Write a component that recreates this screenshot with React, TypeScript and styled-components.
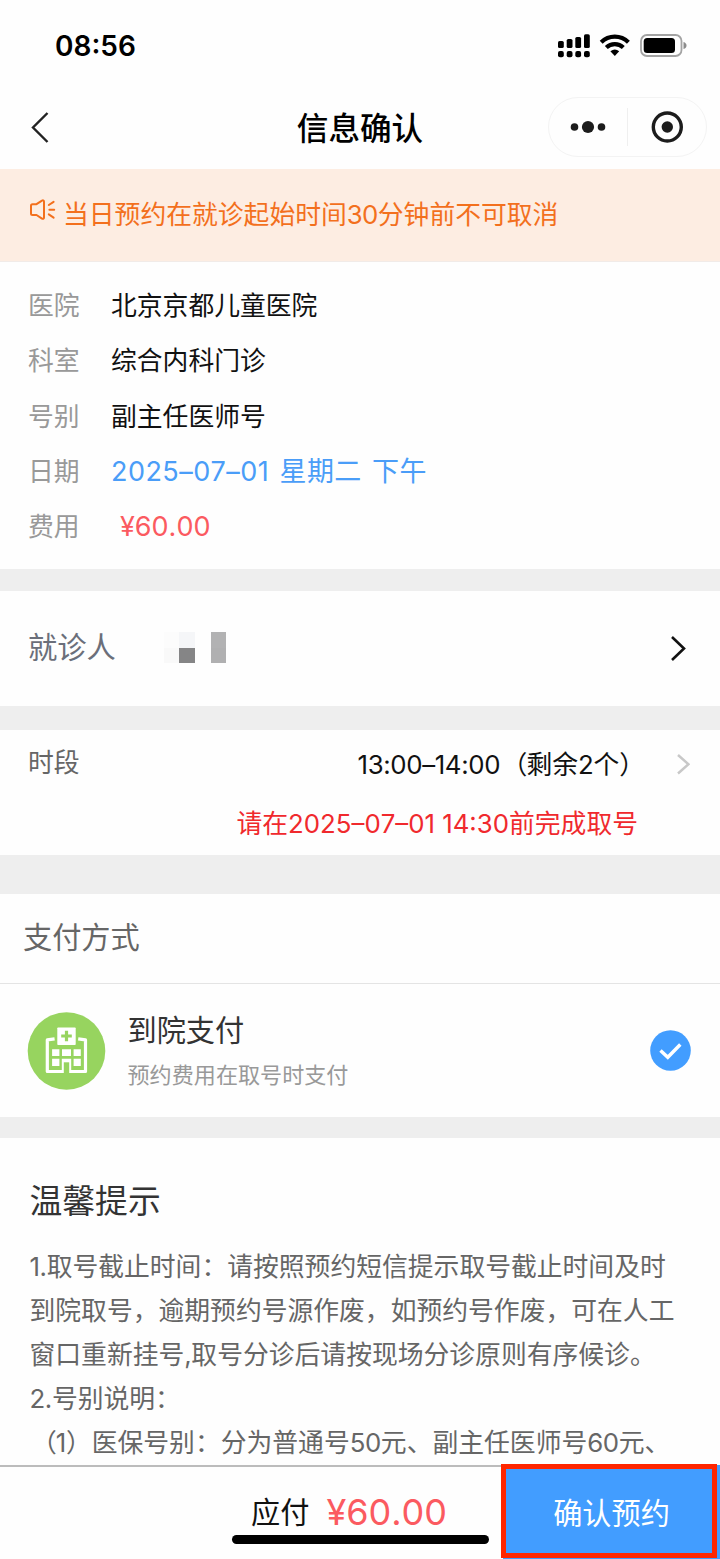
import React from 'react';
import styled, { createGlobalStyle } from 'styled-components';

const GlobalStyle = createGlobalStyle`
  * { box-sizing: border-box; }
  body {
    margin: 0;
    background: #fefefe;
    font-family: Inter, "Noto Sans CJK SC", sans-serif;
    text-spacing-trim: space-all;
    font-kerning: none;
  }
`;

const Screen = styled.div`
  width: 720px;
  height: 1559px;
  display: flex;
  flex-direction: column;
  overflow: hidden;
  background: #fefefe;
`;

const Text = styled.span<{ $size: number; $color?: string; $weight?: number; $track?: number; $word?: number }>`
  font-size: ${p => p.$size}px;
  color: ${p => p.$color ?? '#111'};
  font-weight: ${p => p.$weight ?? 400};
  letter-spacing: ${p => p.$track ?? 0}px;
  word-spacing: ${p => p.$word ?? 0}px;
  line-height: 1.2;
  white-space: pre;
`;

const Digits = styled.span<{ $track: number }>`
  letter-spacing: ${p => p.$track}px;
`;

const OpenParen = styled.span`
  margin-left: 1.5px;
  letter-spacing: -1px;
`;

const StatusBar = styled.header`
  height: 90px;
  flex: none;
  display: flex;
  justify-content: space-between;
  align-items: center;
  padding: 2px 33px 0 55px;
`;

const Clock = styled.div`
  display: flex;
  padding-top: 2px;
`;

const NavBar = styled.nav`
  height: 78.5px;
  flex: none;
  display: grid;
  grid-template-columns: 1fr auto 1fr;
  align-items: center;
  padding: 0 13px 4px;
`;

const Back = styled.div`
  display: flex;
  padding-left: 17.5px;
`;

const NavTitle = styled.div`
  display: flex;
  padding-top: 4px;
`;

const Capsule = styled.div`
  justify-self: end;
  width: 159px;
  height: 60px;
  border: 1px solid #f3f3f3;
  border-radius: 30px;
  display: flex;
  align-items: center;
`;

const CapsuleHalf = styled.div`
  flex: 1;
  display: flex;
  justify-content: center;
`;

const CapsuleRule = styled.div`
  width: 1px;
  height: 38px;
  background: #efefef;
`;

const Notice = styled.div`
  height: 93.5px;
  flex: none;
  display: flex;
  align-items: flex-start;
  gap: 7px;
  padding: 29px 28px;
  background: #fdede2;
  border-bottom: 1px solid #f1ebe8;
`;

const NoticeText = styled.div`
  display: flex;
  padding-top: 2px;
`;

const Info = styled.dl`
  margin: 0;
  height: 307px;
  flex: none;
  padding: 17px 28px 0;
`;

const InfoRow = styled.div`
  height: 55.25px;
  display: flex;
  align-items: center;
`;

const Label = styled.dt`
  width: 83px;
  display: flex;
`;

const Value = styled.dd<{ $indent?: number }>`
  margin: 0 0 0 ${p => p.$indent ?? 0}px;
  display: flex;
`;

const Gap = styled.div<{ $h: number }>`
  height: ${p => p.$h}px;
  flex: none;
  background: #eeeeee;
`;

const Patient = styled.section`
  height: 115px;
  flex: none;
  display: flex;
  align-items: center;
  padding: 0 34px 1px 28px;
`;

const Mosaic = styled.div`
  margin: -1px auto 0 48px;
  display: grid;
  grid-template: repeat(2, 15.7px) / repeat(4, 15.6px);
`;

const Pixel = styled.i<{ $c: string }>`
  background: ${p => p.$c};
`;

const Slot = styled.section`
  height: 125.5px;
  flex: none;
  padding: 14px 30px 0 28px;
`;

const SlotRow = styled.div`
  display: flex;
  align-items: center;
  height: 40px;
`;

const SlotTime = styled.div`
  margin-left: auto;
  padding-top: 4px;
  margin-right: 30.5px;
  display: flex;
`;

const SlotArrow = styled.div`
  display: flex;
  padding-top: 1px;
`;

const SlotHint = styled.div`
  display: flex;
  justify-content: flex-end;
  padding: 25.5px 52px 0 0;
`;

const PayTitle = styled.div`
  height: 89.5px;
  flex: none;
  display: flex;
  align-items: center;
  padding: 0 23px 1px;
  border-bottom: 1px solid #e4e4e4;
`;

const PayOption = styled.div`
  height: 133.5px;
  flex: none;
  display: flex;
  align-items: center;
  padding: 1px 29.5px 0 27.5px;
`;

const PayText = styled.div`
  margin: 0 auto 0 22px;
  display: flex;
  flex-direction: column;
  gap: 13px;
`;

const Tips = styled.section`
  height: 327px;
  flex: none;
  padding: 44.5px 29.5px 0;
  overflow: hidden;
`;

const TipLine = styled.div`
  height: 44.1px;
  display: flex;
  align-items: center;
`;

const TipBody = styled.div`
  padding-top: 24px;
`;

const Footer = styled.footer`
  position: relative;
  height: 94px;
  flex: none;
  display: flex;
  border-top: 2px solid #bcbcbc;
`;

const Total = styled.div`
  width: 503px;
  display: flex;
  align-items: center;
  justify-content: flex-end;
  gap: 17px;
  padding: 1px 56px 0 0;
`;

const Confirm = styled.button`
  flex: 1;
  margin-top: -2px;
  border: 0;
  padding: 5px 0 0;
  background: #429dff;
  font-family: inherit;
`;

const Highlight = styled.div`
  position: absolute;
  left: 501px;
  top: -3px;
  width: 216px;
  height: 94.5px;
  border: 5.5px solid #ff2600;
`;

const HomeIndicator = styled.div`
  position: absolute;
  left: 232px;
  top: 68px;
  width: 257px;
  height: 9px;
  border-radius: 5px;
  background: #000;
`;

const Mixed = ({ text, track }: { text: string; track: number }) => (
  <>
    {text.split(/([0-9.,:–]+|（)/).map((part, i) => {
      if (part === '（') return <OpenParen key={i}>{part}</OpenParen>;
      return i % 2 ? <Digits key={i} $track={track}>{part}</Digits> : part;
    })}
  </>
);

const StatusIcons = () => (
  <svg width="130" height="26" viewBox="557 33 130 26">
    <rect x="558" y="41" width="5.8" height="7" rx="1.6" />
    <rect x="566.7" y="39" width="5.8" height="9" rx="1.6" />
    <rect x="575.3" y="37" width="5.8" height="11" rx="1.6" />
    <rect x="584" y="34.3" width="5.8" height="13.7" rx="1.6" />
    {[558, 566.7, 575.3, 584].map(x => (
      <rect key={x} x={x} y="51" width="5.8" height="6.2" rx="2" />
    ))}
    <g fill="none" stroke="#000">
      <path d="M601.2 42.2A19.5 19.5 0 0 1 628.4 42.2" strokeWidth="4.2" />
      <path d="M606.3 47.6A12.2 12.2 0 0 1 623.3 47.6" strokeWidth="4.2" />
    </g>
    <path d="M610.4 51.3Q614.8 47.6 619.2 51.3L614.8 56Z" />
    <rect x="641" y="35" width="40.5" height="21" rx="6" fill="none" stroke="#a3a3a3" strokeWidth="1.8" />
    <rect x="643.7" y="38" width="31.3" height="15" rx="3.5" />
    <path d="M683.5 42Q686.5 43 686.5 45.5T683.5 49Z" fill="#8c8c8c" />
  </svg>
);

const Chevron = ({ w, h, color, stroke, left }: { w: number; h: number; color: string; stroke: number; left?: boolean }) => (
  <svg width={w + 4} height={h + 4} viewBox={`-2 -2 ${w + 4} ${h + 4}`} fill="none" stroke={color} strokeWidth={stroke}>
    <path d={left ? `M${w} 0L0 ${h / 2}L${w} ${h}` : `M0 0L${w} ${h / 2}L0 ${h}`} />
  </svg>
);

const Speaker = () => (
  <svg width="28" height="24" viewBox="28 197 28 24" fill="none" stroke="#f3701d" strokeWidth="2" strokeLinecap="round" strokeLinejoin="round">
    <path d="M32.5 203.2H36.5L42 199.6Q44 198.8 44 200.8V216.4Q44 218.4 42 217.6L36.5 214H32.5Q31 214 31 212.5V204.7Q31 203.2 32.5 203.2Z" />
    <path d="M48.8 204L53.6 200.8M49.4 208.7H54.2M48.8 213.4L53.6 216.6" />
  </svg>
);

const Hospital = () => (
  <svg width="78" height="78" viewBox="28.2 1011.7 78 78" overflow="visible">
    <circle cx="66.7" cy="1050.7" r="38.8" fill="#97d45f" />
    <path d="M54.8 1038.6L47.5 1039.6V1071.2H85.7V1039.6L78.4 1038.6" fill="none" stroke="#fff" strokeWidth="3.2" strokeLinejoin="round" />
    <rect x="57.5" y="1027.2" width="18.4" height="17.5" rx="0.8" fill="#fff" />
    <path d="M66.7 1030.4V1041M61.4 1035.7H72" stroke="#97d45f" strokeWidth="3.2" />
    <path
      fill="#fff"
      d="M52.3 1049h7.3v6.7h-7.3zM62.2 1049h9v6.7h-9zM73.8 1049h7.2v6.7h-7.2zM52.3 1058.5h7.3v7.2h-7.3zM73.8 1058.5h7.2v7.2h-7.2zM62 1058.5h9.4v14.2h-9.4z"
    />
    <rect x="64" y="1062" width="5.4" height="11" fill="#97d45f" />
  </svg>
);

const CheckBadge = () => (
  <svg width="41" height="41" viewBox="0 0 41 41">
    <circle cx="20.5" cy="20.5" r="20.3" fill="#429dff" />
    <path d="M10.5 20.4L17.8 27.3L30.3 14.5" fill="none" stroke="#fff" strokeWidth="3.4" />
  </svg>
);

const tips = [
  '1.取号截止时间：请按照预约短信提示取号截止时间及时',
  '到院取号，逾期预约号源作废，如预约号作废，可在人工',
  '窗口重新挂号,取号分诊后请按现场分诊原则有序候诊。',
  '2.号别说明：',
  '（1）医保号别：分为普通号50元、副主任医师号60元、',
];

const rows = [
  { label: '医院', value: '北京京都儿童医院', color: '#111', size: 25.8 },
  { label: '科室', value: '综合内科门诊', color: '#111', size: 25.8 },
  { label: '号别', value: '副主任医师号', color: '#111', size: 25.8 },
  { label: '日期', value: '2025–07–01 星期二 下午', color: '#4a9df8', size: 27, track: 0.45, word: 2.2 },
  { label: '费用', value: '¥60.00', color: '#fb5a60', size: 27, indent: 9 },
];

export default function App() {
  return (
    <Screen>
      <GlobalStyle />
      <StatusBar>
        <Clock><Text $size={28} $weight={600} $color="#000">08:56</Text></Clock>
        <StatusIcons />
      </StatusBar>
      <NavBar>
        <Back><Chevron w={14.5} h={29} color="#222" stroke={2.4} left /></Back>
        <NavTitle><Text $size={31.6} $weight={500} $color="#000">信息确认</Text></NavTitle>
        <Capsule>
          <CapsuleHalf>
            <svg width="36" height="14" viewBox="570.5 120.3 36 14" fill="#1c1c1c">
              <circle cx="575" cy="127.3" r="3.8" />
              <circle cx="588.5" cy="127.3" r="6.1" />
              <circle cx="602" cy="127.3" r="3.8" />
            </svg>
          </CapsuleHalf>
          <CapsuleRule />
          <CapsuleHalf>
            <svg width="32" height="32" viewBox="-0.3 0 32 32" fill="#1c1c1c">
              <circle cx="16" cy="16" r="14" fill="none" stroke="#1c1c1c" strokeWidth="3.4" />
              <circle cx="16" cy="16" r="5.7" />
            </svg>
          </CapsuleHalf>
        </Capsule>
      </NavBar>
      <Notice>
        <Speaker />
        <NoticeText>
          <Text $size={25.8} $color="#f3701d"><Mixed text="当日预约在就诊起始时间30分钟前不可取消" track={-0.6} /></Text>
        </NoticeText>
      </Notice>
      <Info>
        {rows.map(r => (
          <InfoRow key={r.label}>
            <Label><Text $size={25.8} $color="#999">{r.label}</Text></Label>
            <Value $indent={r.indent}>
              <Text $size={r.size} $color={r.color} $track={r.track} $word={r.word}>{r.value}</Text>
            </Value>
          </InfoRow>
        ))}
      </Info>
      <Gap $h={22} />
      <Patient>
        <Text $size={29.3} $color="#6b6f7a">就诊人</Text>
        <Mosaic>
          {['#fcfcfc', '#f5f6f8', '#fefefe', '#b2b2b3', '#f9f9f9', '#858586', '#fefefe', '#b0b0b1'].map((c, i) => (
            <Pixel key={i} $c={c} />
          ))}
        </Mosaic>
        <Chevron w={12} h={23} color="#111" stroke={2.6} />
      </Patient>
      <Gap $h={23.5} />
      <Slot>
        <SlotRow>
          <Text $size={25.8} $color="#666">时段</Text>
          <SlotTime><Text $size={25.8}><Mixed text="13:00–14:00（剩余2个）" track={-0.35} /></Text></SlotTime>
          <SlotArrow><Chevron w={10.5} h={18.5} color="#c8c8c8" stroke={2.5} /></SlotArrow>
        </SlotRow>
        <SlotHint><Text $size={25.8} $color="#f0292d">请在2025–07–01 14:30前完成取号</Text></SlotHint>
      </Slot>
      <Gap $h={39} />
      <PayTitle><Text $size={29.2} $color="#666">支付方式</Text></PayTitle>
      <PayOption>
        <Hospital />
        <PayText>
          <Text $size={29.2} $color="#333">到院支付</Text>
          <Text $size={22.1} $color="#999">预约费用在取号时支付</Text>
        </PayText>
        <CheckBadge />
      </PayOption>
      <Gap $h={20.5} />
      <Tips>
        <Text $size={32.8} $color="#333">温馨提示</Text>
        <TipBody>
          {tips.map(line => (
            <TipLine key={line}>
              <Text $size={25.8} $color="#666"><Mixed text={line} track={-0.4} /></Text>
            </TipLine>
          ))}
        </TipBody>
      </Tips>
      <Footer>
        <Total>
          <Text $size={29.2}>应付</Text>
          <Text $size={36} $color="#fb5a60">¥60.00</Text>
        </Total>
        <Confirm><Text $size={29.2} $color="#fff">确认预约</Text></Confirm>
        <Highlight />
        <HomeIndicator />
      </Footer>
    </Screen>
  );
}
